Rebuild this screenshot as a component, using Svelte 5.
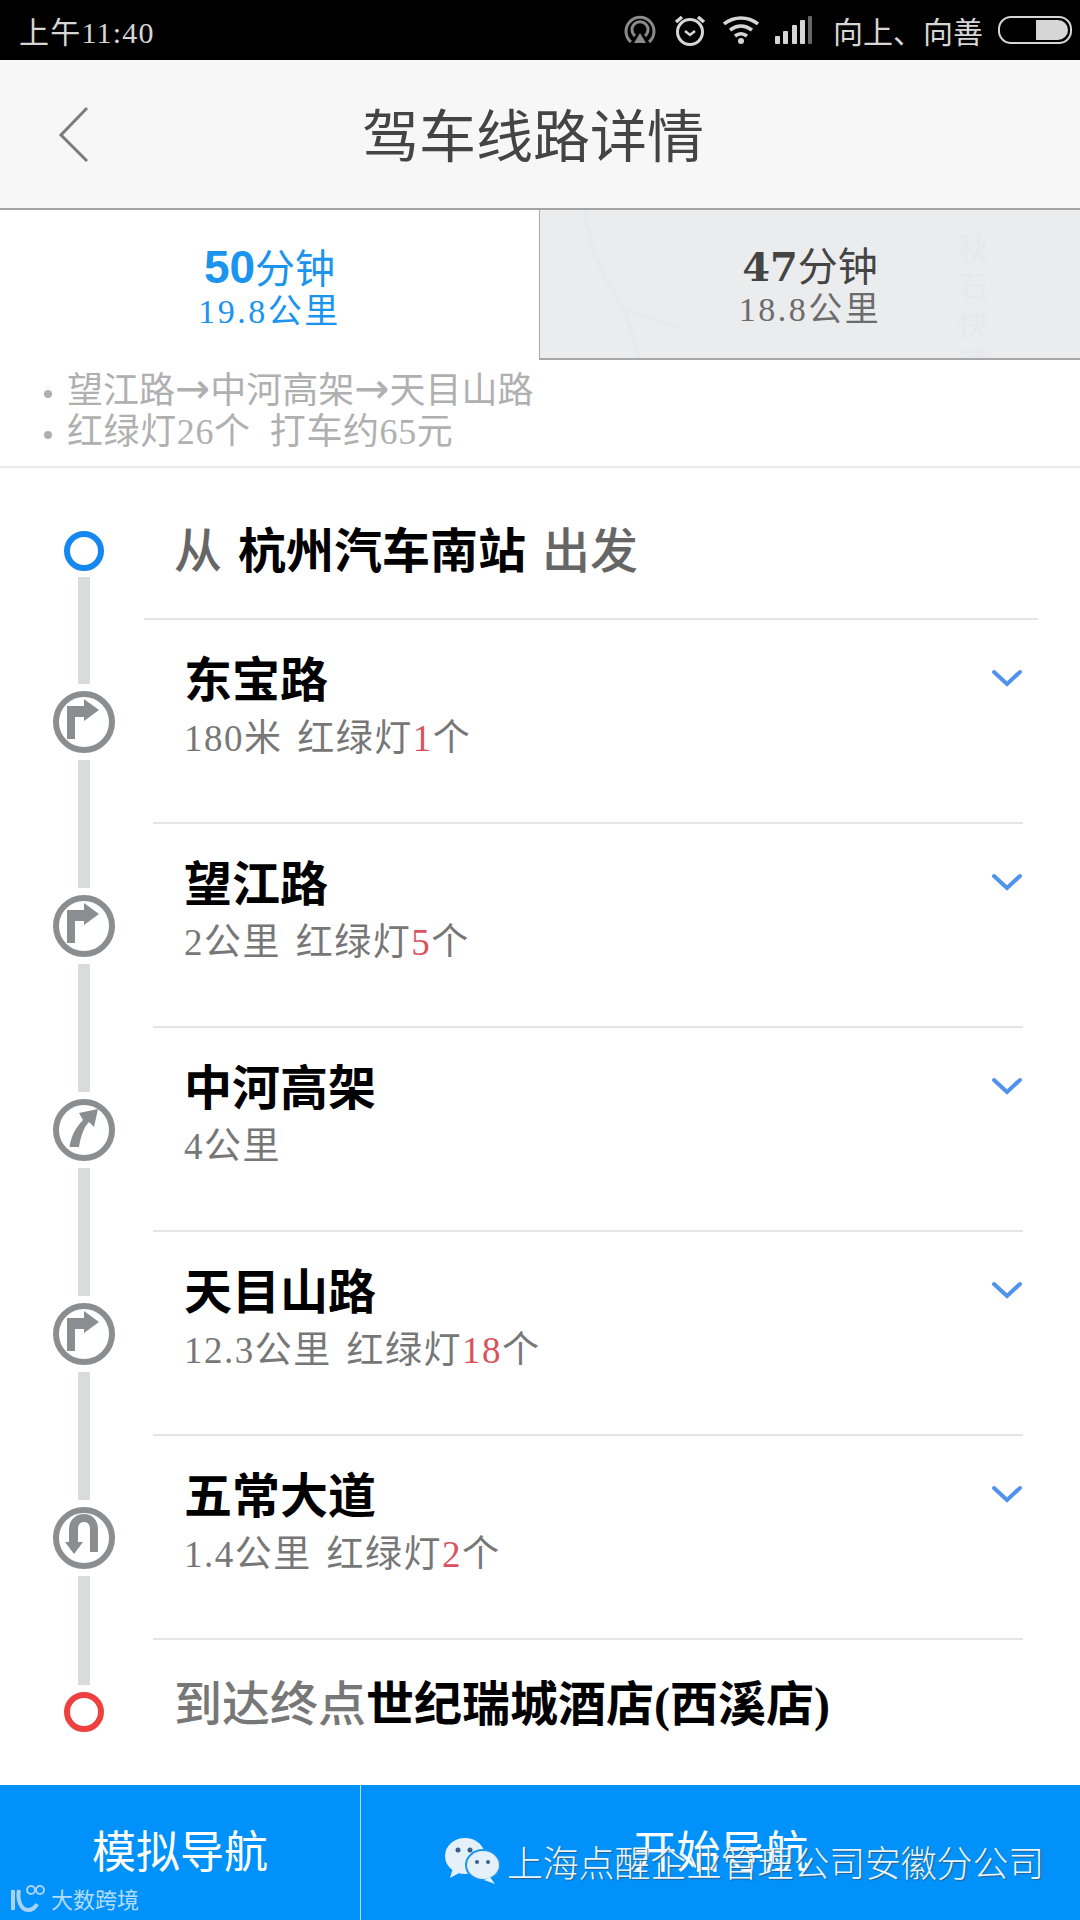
<script>
    const rows = [
        { name: "东宝路", dist: "180米", lights: "1", turn: "right" },
        { name: "望江路", dist: "2公里", lights: "5", turn: "right" },
        { name: "中河高架", dist: "4公里", lights: "", turn: "bear" },
        { name: "天目山路", dist: "12.3公里", lights: "18", turn: "right" },
        { name: "五常大道", dist: "1.4公里", lights: "2", turn: "uturn" }
    ];
</script>

<div class="page">
    <div class="status">
        <span class="clock">上午11:40</span>
        <div class="status-right">
            <svg class="ic" width="34" height="34" viewBox="0 0 34 34" fill="none" stroke="#8a8a8a" stroke-width="3">
                <path d="M8 29a14 14 0 1 1 18 0" />
                <path d="M12 23a8 8 0 1 1 10 0" />
                <path d="M17 20l6 10H11z" fill="#8a8a8a" stroke="none" />
            </svg>
            <svg class="ic" width="34" height="34" viewBox="0 0 34 34" fill="none" stroke="#d6d6d6" stroke-width="3">
                <circle cx="17" cy="19" r="12.5" />
                <path d="M12 18l5 4 5-4" stroke-width="2.5" />
                <path d="M3 9l6-5M31 9l-6-5" stroke-width="3.5" />
            </svg>
            <svg class="ic" width="36" height="30" viewBox="0 0 36 30" fill="none" stroke="#d6d6d6" stroke-width="3.5">
                <path d="M1 9c10-8 24-8 34 0" />
                <path d="M7 15c7-5 15-5 22 0" />
                <path d="M12 21c4-3 8-3 12 0" />
                <circle cx="18" cy="26" r="3" fill="#d6d6d6" stroke="none" />
            </svg>
            <svg class="ic signal" width="38" height="28" viewBox="0 0 38 28">
                <rect x="0" y="20" width="5" height="8" rx="1" fill="#d6d6d6" />
                <rect x="8" y="15" width="5" height="13" rx="1" fill="#d6d6d6" />
                <rect x="17" y="9" width="5" height="19" rx="1" fill="#d6d6d6" />
                <rect x="25" y="4" width="5" height="24" rx="1" fill="#d6d6d6" />
                <rect x="33" y="0" width="4" height="28" rx="1" fill="#666" />
            </svg>
            <span class="carrier">向上、向善</span>
            <div class="battery"><i></i></div>
        </div>
    </div>

    <header class="top">
        <svg class="back" width="32" height="56" viewBox="0 0 32 56" fill="none" stroke="#7c7c7c" stroke-width="3">
            <path d="M29 2L3 29l26 26" />
        </svg>
        <h1>驾车线路详情</h1>
    </header>

    <div class="tabs">
        <div class="tab active">
            <div class="time"><b>50</b>分钟</div>
            <div class="dist">19.8公里</div>
        </div>
        <div class="tab other">
            <svg class="mapbg" width="540" height="150" viewBox="0 0 540 150" fill="none" stroke="#e8e9ee" stroke-width="4">
                <path d="M45 0c4 40 20 70 40 100l14 50" />
                <path d="M85 100l55 18" />
            </svg>
            <div class="mapname">秋<br />石<br />快<br />速</div>
            <div class="time"><b>47</b>分钟</div>
            <div class="dist">18.8公里</div>
        </div>
    </div>

    <div class="summary">
        <div>望江路<span class="arrow">→</span>中河高架<span class="arrow">→</span>天目山路</div>
        <div class="second">红绿灯26个&nbsp;&nbsp;打车约65元</div>
    </div>

    <div class="route">
        <div class="rail">
            <div class="dot start"></div>
            <div class="seg first"></div>
            {#each rows as row, i}
                <svg class="turn" width="62" height="62" viewBox="0 0 62 62">
                    <circle cx="31" cy="31" r="28" fill="#fff" stroke="#8b8e91" stroke-width="6" />
                    {#if row.turn === "right"}
                        <path d="M14 48V15h17V8l15 11-15 11v-4H22v22z" fill="#8b8e91" />
                    {:else if row.turn === "bear"}
                        <path d="M16.5 48C18 37 23 28 30 21l-4-7 19-4-4 18-5-5c-5 5-8 13-10 25z" fill="#8b8e91" />
                    {:else}
                        <path d="M45 45V22c0-9-6-15-14-15s-15 6-15 15v13h-4l9 12 9-12h-5V22c0-4 2-7 6-7s6 3 6 7v23z" fill="#8b8e91" />
                    {/if}
                </svg>
                <div class="seg" class:last={i === rows.length - 1}></div>
            {/each}
            <div class="dot end"></div>
        </div>

        <div class="steps">
            <div class="start-row">从 <b>杭州汽车南站</b> 出发</div>
            {#each rows as row}
                <div class="step">
                    <div class="step-text">
                        <div class="name">{row.name}</div>
                        <div class="sub">
                            {row.dist}
                            {#if row.lights}
                                红绿灯<em>{row.lights}</em>个
                            {/if}
                        </div>
                    </div>
                    <svg class="chev" width="32" height="20" viewBox="0 0 32 20" fill="none" stroke="#4f93ee" stroke-width="4" stroke-linecap="round">
                        <path d="M3 4l13 12L29 4" />
                    </svg>
                </div>
            {/each}
            <div class="end-row">到达终点<b>世纪瑞城酒店(西溪店)</b></div>
        </div>
    </div>

    <div class="bottom">
        <div class="btn sim">模拟导航</div>
        <div class="btn go">开始导航</div>

        <div class="mark-wechat">
            <svg width="58" height="48" viewBox="0 0 58 48">
                <ellipse cx="22" cy="19" rx="20" ry="18" fill="#e4f1fa" />
                <path d="M10 31l-3 10 11-6z" fill="#e4f1fa" />
                <ellipse cx="40" cy="28" rx="17" ry="15" fill="#e4f1fa" stroke="#1a94ef" stroke-width="2" />
                <path d="M47 40l5 7-11-4z" fill="#e4f1fa" />
                <circle cx="15" cy="13" r="2.5" fill="#37608a" />
                <circle cx="27" cy="13" r="2.5" fill="#37608a" />
                <circle cx="34" cy="25" r="2" fill="#37608a" />
                <circle cx="45" cy="25" r="2" fill="#37608a" />
            </svg>
            <span>上海点醒企业管理公司安徽分公司</span>
        </div>
        <div class="mark-logo">
            <svg width="40" height="28" viewBox="0 0 40 28" fill="none" stroke="#a9d3f2" stroke-width="3">
                <path d="M3 6v20" stroke-width="4" />
                <path d="M9 6c-2 10 2 20 9 20 4 0 7-2 9-6" stroke-width="4" />
                <circle cx="21" cy="6" r="4" stroke-width="2" />
                <circle cx="30" cy="6" r="4" stroke-width="2" />
            </svg>
            <span>大数跨境</span>
        </div>
    </div>
</div>

<style>
    :global(body) {
        margin: 0;
        background: #fff;
    }

    .page {
        position: relative;
        width: 1080px;
        height: 1920px;
        overflow: hidden;
        background: #fff;
        font-family: "Liberation Serif", "Noto Sans CJK SC", serif;
    }

    .status {
        height: 60px;
        background: #000;
        color: #d6d6d6;
        display: flex;
        align-items: center;
        justify-content: space-between;
        padding: 0 8px 0 19px;
        box-sizing: border-box;
    }

    .clock {
        font-size: 30px;
        letter-spacing: 1.2px;
    }

    .status-right {
        display: flex;
        align-items: center;
    }

    .ic {
        margin-right: 16px;
    }

    .signal {
        margin-right: 20px;
    }

    .carrier {
        font-size: 30px;
        margin-right: 15px;
    }

    .battery {
        width: 66px;
        border: 2px solid #d6d6d6;
        border-radius: 13px;
        display: flex;
        justify-content: flex-end;
        padding: 2px;
        height: 20px;
    }

    .battery i {
        display: block;
        width: 32px;
        background: #d6d6d6;
        border-radius: 0 10px 10px 0;
    }

    .top {
        height: 148px;
        background: #f7f7f7;
        display: flex;
        align-items: center;
        border-bottom: 2px solid #a4a4a4;
    }

    .back {
        margin-left: 58px;
        flex: none;
    }

    .top h1 {
        margin: -4px 0 0 272px;
        font-size: 57px;
        font-weight: 400;
        color: #444;
    }

    .tabs {
        display: flex;
        height: 150px;
    }

    .tab {
        position: relative;
        text-align: center;
        box-sizing: border-box;
        padding-top: 35px;
    }

    .tab.active {
        width: 539px;
        color: #1a94ef;
    }

    .tab.other {
        width: 541px;
        background: #ebecee;
        color: #6c6c6c;
        border-left: 1px solid #a8a8a8;
        border-bottom: 2px solid #a8a8a8;
        overflow: hidden;
    }

    .mapbg {
        position: absolute;
        left: 0;
        top: 0;
    }

    .mapname {
        position: absolute;
        left: 418px;
        top: 20px;
        font-size: 30px;
        line-height: 38px;
        color: #e6e8ed;
    }

    .time,
    .dist {
        position: relative;
    }

    .time {
        font-size: 40px;
        line-height: 44px;
    }

    .time b {
        font-family: "Liberation Sans", sans-serif;
        font-size: 46px;
    }

    .other .time {
        color: #444;
    }

    .other .time b {
        font-family: "DejaVu Serif", serif;
        font-size: 40px;
    }

    .dist {
        font-size: 34px;
        line-height: 40px;
        letter-spacing: 2.5px;
    }

    .summary {
        height: 108px;
        box-sizing: border-box;
        border-bottom: 2px solid #eaeaea;
        padding: 11px 0 0 67px;
        font-size: 36px;
        line-height: 41px;
        color: #b0b0b0;
    }

    .summary div {
        position: relative;
    }

    .summary div::before {
        content: "";
        position: absolute;
        left: -23px;
        top: 19px;
        width: 8px;
        height: 8px;
        border-radius: 50%;
        background: #b0b0b0;
    }

    .summary .second {
        letter-spacing: 0.6px;
    }

    .arrow {
        font-family: "DejaVu Sans", sans-serif;
        font-size: 42px;
        line-height: 0;
    }

    .route {
        display: flex;
        height: 1318px;
    }

    .rail {
        width: 144px;
        flex: none;
        padding: 63px 0 0 24px;
        box-sizing: border-box;
        display: flex;
        flex-direction: column;
        align-items: center;
    }

    .dot {
        width: 40px;
        height: 40px;
        box-sizing: border-box;
        border-radius: 50%;
        border: 6px solid #1588f0;
        flex: none;
    }

    .dot.end {
        border-color: #ef4040;
    }

    .seg {
        width: 12px;
        height: 128px;
        background: #d9dcdc;
        margin: 7px 0;
        flex: none;
    }

    .seg.first {
        height: 107px;
        margin-top: 6px;
    }

    .seg.last {
        height: 109px;
    }

    .turn {
        flex: none;
    }

    .steps {
        flex: 1;
        padding-right: 42px;
    }

    .start-row {
        height: 152px;
        box-sizing: border-box;
        padding: 52px 0 0 30px;
        border-bottom: 2px solid #e4e4e4;
        font-size: 48px;
        font-weight: 500;
        word-spacing: 4px;
        line-height: 64px;
        color: #666;
    }

    .start-row b,
    .end-row b {
        color: #000;
    }

    .step {
        height: 204px;
        box-sizing: border-box;
        margin-left: 9px;
        margin-right: 15px;
        border-bottom: 2px solid #e4e4e4;
        display: flex;
        justify-content: space-between;
        padding: 30px 0 0 31px;
    }

    .name {
        font-size: 48px;
        font-weight: 700;
        line-height: 62px;
        color: #000;
    }

    .sub {
        font-size: 37px;
        letter-spacing: 1.5px;
        word-spacing: 4px;
        line-height: 48px;
        margin-top: 3px;
        color: #777;
    }

    .sub em {
        font-style: normal;
        color: #d9535f;
    }

    .chev {
        margin: 18px 0 0 0;
    }

    .end-row {
        padding: 33px 0 0 30px;
        font-size: 48px;
        font-weight: 500;
        line-height: 64px;
        color: #777;
        white-space: nowrap;
    }

    .bottom {
        position: absolute;
        left: 0;
        right: 0;
        bottom: 0;
        height: 135px;
        background: #0091fb;
        display: flex;
        color: #fff;
        font-size: 44px;
    }

    .btn {
        display: flex;
        align-items: center;
        justify-content: center;
        padding-bottom: 8px;
    }

    .sim {
        width: 361px;
        border-right: 1px solid #b5dcf8;
        box-sizing: border-box;
    }

    .go {
        flex: 1;
    }

    .mark-wechat {
        position: absolute;
        left: 443px;
        top: 50px;
        display: flex;
        align-items: center;
        gap: 6px;
        font-size: 36px;
        letter-spacing: -0.2px;
        font-family: "Noto Sans CJK SC", sans-serif;
        font-weight: 300;
        color: #e9f5fd;
        text-shadow: 1px 1px 1px #2a5f8a;
    }

    .mark-logo {
        position: absolute;
        left: 10px;
        bottom: 6px;
        display: flex;
        align-items: center;
        gap: 1px;
        font-size: 22px;
        font-family: "Noto Sans CJK SC", sans-serif;
        color: #b4dcf6;
    }
</style>
